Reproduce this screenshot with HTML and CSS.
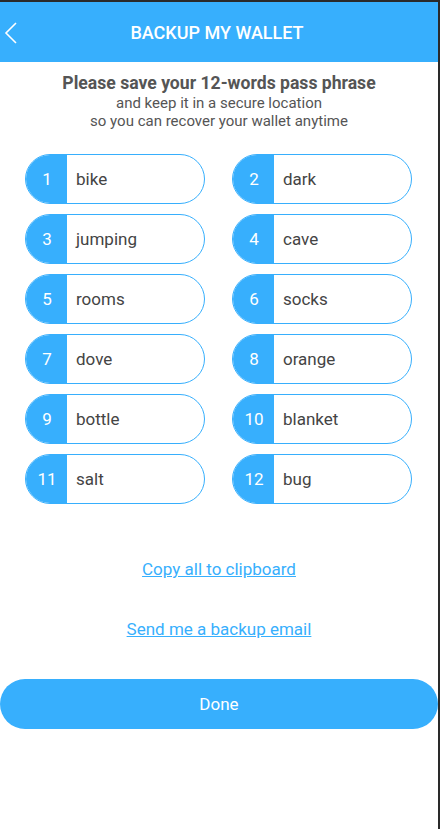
FILE: index.html
```html
<!DOCTYPE html>
<html>
<head>
<meta charset="utf-8">
<link rel="stylesheet" href="styles.css">
</head>
<body>
<div class="screen">
  <header class="topbar">
    <svg class="back" width="14" height="22" viewBox="0 0 14 22"><path d="M12 1 L2 11 L12 21" fill="none" stroke="#fff" stroke-width="1.6"/></svg>
    <h1 class="title">BACKUP MY WALLET</h1>
  </header>
  <section class="intro">
    <p class="lead">Please save your 12-words pass phrase</p>
    <p class="sub">and keep it in a secure location<br>so you can recover your wallet anytime</p>
  </section>
  <div class="words">
    <div class="word"><span class="num">1</span><span class="txt">bike</span></div>
    <div class="word"><span class="num">2</span><span class="txt">dark</span></div>
    <div class="word"><span class="num">3</span><span class="txt">jumping</span></div>
    <div class="word"><span class="num">4</span><span class="txt">cave</span></div>
    <div class="word"><span class="num">5</span><span class="txt">rooms</span></div>
    <div class="word"><span class="num">6</span><span class="txt">socks</span></div>
    <div class="word"><span class="num">7</span><span class="txt">dove</span></div>
    <div class="word"><span class="num">8</span><span class="txt">orange</span></div>
    <div class="word"><span class="num">9</span><span class="txt">bottle</span></div>
    <div class="word"><span class="num">10</span><span class="txt">blanket</span></div>
    <div class="word"><span class="num">11</span><span class="txt">salt</span></div>
    <div class="word"><span class="num">12</span><span class="txt">bug</span></div>
  </div>
  <div class="links">
    <a class="link" href="#">Copy all to clipboard</a>
    <a class="link" href="#">Send me a backup email</a>
  </div>
  <button class="done">Done</button>
</div>
</body>
</html>
```
FILE: styles.css
```css
html, body {
  margin: 0;
  padding: 0;
  background: #2a2a2a;
}
body {
  font-family: Roboto, "Liberation Sans", sans-serif;
}
.screen {
  width: 438px;
  height: 827px;
  margin-top: 2px;
  background: #fff;
  display: flex;
  flex-direction: column;
}
.topbar {
  height: 60px;
  background: #37affd;
  display: flex;
  align-items: center;
  justify-content: center;
  position: relative;
}
.back {
  position: absolute;
  left: 4px;
  top: 20px;
}
.title {
  margin: 0;
  padding-right: 4px;
  color: #fff;
  font-size: 18px;
  font-weight: 500;
}
.intro {
  text-align: center;
  color: #555;
  padding-top: 10px;
}
.lead {
  margin: 0;
  font-size: 17.6px;
  font-weight: 700;
  line-height: 22px;
}
.sub {
  margin: 0;
  font-size: 15px;
  line-height: 18px;
}
.words {
  display: grid;
  grid-template-columns: 180px 180px;
  column-gap: 27px;
  row-gap: 10px;
  padding-left: 25px;
  margin-top: 24px;
}
.word {
  height: 50px;
  box-sizing: border-box;
  border: 1px solid #37affd;
  border-radius: 25px;
  display: flex;
  align-items: center;
  overflow: hidden;
}
.num {
  width: 40px;
  align-self: stretch;
  background: #37affd;
  color: #fff;
  font-size: 17px;
  display: flex;
  align-items: center;
  justify-content: center;
  padding-left: 1px;
}
.txt {
  padding-left: 9px;
  color: #444;
  font-size: 17px;
}
.links {
  display: flex;
  flex-direction: column;
  align-items: center;
  gap: 41px;
  margin-top: 56px;
}
.link {
  color: #37affd;
  font-size: 17px;
  line-height: 19px;
  text-decoration: underline;
}
.done {
  margin-top: 40px;
  width: 438px;
  height: 50px;
  border: none;
  border-radius: 25px;
  background: #37affd;
  color: #fff;
  font-family: Roboto, "Liberation Sans", sans-serif;
  font-size: 17px;
}
```
